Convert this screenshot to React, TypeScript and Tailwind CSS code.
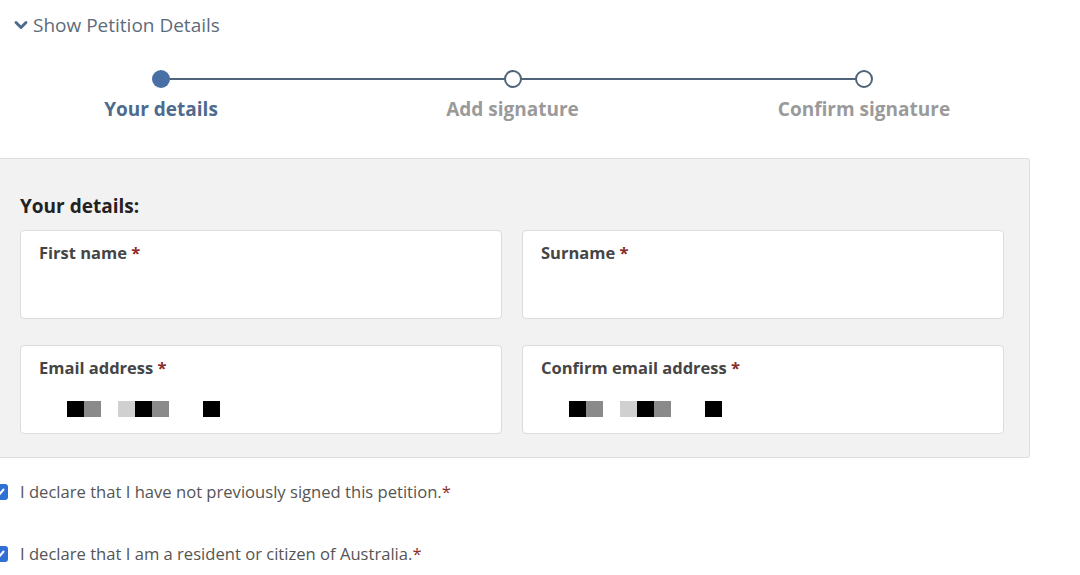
import { ChevronDown } from "lucide-react";

const Redacted = ({ cells }: { cells: string[] }) => (
  <div className="flex h-4">
    {cells.map((c, i) => (
      <div key={i} className={`w-[17px] h-4 ${c}`} />
    ))}
  </div>
);

const Field = ({ label, masked }: { label: string; masked?: boolean }) => (
  <div className="flex-1 h-[89px] bg-white border border-[#dcdcdc] rounded-[4px] pt-[11px] px-[18px]">
    <div className="text-[16.5px] font-bold text-[#454545] leading-[22px]">
      {label} <span className="text-[#8a2c2c]">*</span>
    </div>
    {masked && (
      <div className="mt-[22px] pl-[28px] flex">
        <Redacted cells={["bg-black", "bg-[#8a8a8a]"]} />
        <div className="w-[17px]" />
        <Redacted cells={["bg-[#d0d0d0]", "bg-black", "bg-[#8a8a8a]"]} />
        <div className="w-[34px]" />
        <Redacted cells={["bg-black"]} />
      </div>
    )}
  </div>
);

const Step = ({ label, active }: { label: string; active?: boolean }) => (
  <div className="flex flex-col items-center w-[240px]">
    <div
      className={
        active
          ? "w-[18px] h-[18px] rounded-full bg-[#4a6fa5] z-10"
          : "w-[18px] h-[18px] rounded-full bg-white border-2 border-[#4f6478] z-10"
      }
    />
    <div
      className={`mt-[9px] text-[19px] font-bold leading-[24px] ${active ? "text-[#4e6a8e]" : "text-[#9a9a9a]"}`}
    >
      {label}
    </div>
  </div>
);

const Declaration = ({ text }: { text: string }) => (
  <div className="flex items-center">
    <div className="-ml-[8px] w-[16px] h-[16px] rounded-[3px] bg-[#2f6fd6] flex items-center justify-center">
      <svg viewBox="0 0 12 12" className="w-[12px] h-[12px]">
        <path d="M2 6.5 L4.8 9 L10 3" stroke="white" strokeWidth="2" fill="none" />
      </svg>
    </div>
    <span className="ml-[12px] text-[16.6px] text-[#555]">
      {text}
      <span className="text-[#8a2c2c]">*</span>
    </span>
  </div>
);

export default function App() {
  return (
    <div
      className="w-[1080px] h-[575px] bg-white overflow-hidden relative"
      style={{ fontFamily: '"Open Sans", "Liberation Sans", sans-serif' }}
    >
      <div className="flex items-center pt-[12px] pl-[11px] text-[#5d6b7c]">
        <ChevronDown className="w-[20px] h-[20px]" strokeWidth={3.5} color="#4e6a8e" />
        <span className="ml-[2px] text-[19px] leading-[26px]">Show Petition Details</span>
      </div>

      <div className="relative mt-[32px] ml-[41px] w-[943px] flex justify-between">
        <div className="absolute top-[8px] left-[120px] right-[120px] h-[2px] bg-[#4f6478]" />
        <Step label="Your details" active />
        <Step label="Add signature" />
        <Step label="Confirm signature" />
      </div>

      <div className="mt-[37px] w-[1030px] h-[300px] bg-[#f2f2f2] border border-l-0 border-[#dedede] rounded-r-[3px] pl-[20px] pr-[25px] pt-[35px]">
        <div className="text-[19px] font-bold text-[#222] leading-[24px]">Your details:</div>
        <div className="mt-[12px] flex gap-[20px]">
          <Field label="First name" />
          <Field label="Surname" />
        </div>
        <div className="mt-[26px] flex gap-[20px]">
          <Field label="Email address" masked />
          <Field label="Confirm email address" masked />
        </div>
      </div>

      <div className="mt-[22px] flex flex-col gap-[37px]">
        <Declaration text="I declare that I have not previously signed this petition." />
        <Declaration text="I declare that I am a resident or citizen of Australia." />
      </div>
    </div>
  );
}
